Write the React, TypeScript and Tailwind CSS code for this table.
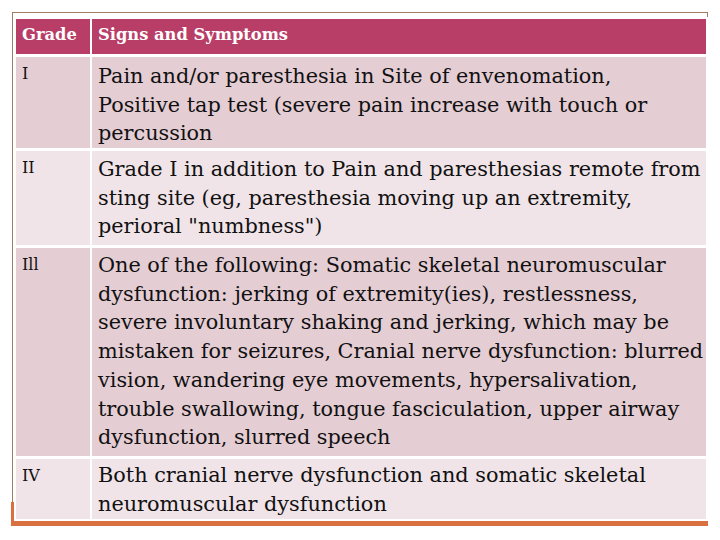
const ROWS = [
  {
    grade: "I",
    pad: "pt-[5px]",
    lines: [
      "Pain and/or paresthesia in Site of envenomation,",
      "Positive tap test (severe pain increase with touch or",
      "percussion",
    ],
  },
  {
    grade: "II",
    pad: "pt-[4px]",
    lines: [
      "Grade I in addition to Pain and paresthesias remote from",
      "sting site (eg, paresthesia moving up an extremity,",
      'perioral "numbness")',
    ],
  },
  {
    grade: "Ill",
    pad: "pt-[3px]",
    lines: [
      "One of the following: Somatic skeletal neuromuscular",
      "dysfunction: jerking of extremity(ies), restlessness,",
      "severe involuntary shaking and jerking, which may be",
      "mistaken for seizures, Cranial nerve dysfunction: blurred",
      "vision, wandering eye movements, hypersalivation,",
      "trouble swallowing, tongue fasciculation, upper airway",
      "dysfunction, slurred speech",
    ],
  },
  {
    grade: "IV",
    pad: "pt-[2px]",
    lines: ["Both cranial nerve dysfunction and somatic skeletal", "neuromuscular dysfunction"],
  },
];

export default function App() {
  return (
    <div className="w-[720px] h-[540px] bg-white pt-[12px] pl-[12px] font-[family-name:DejaVu_Serif,serif]">
      <div className="relative w-[696px] border-t border-l border-[#a27c5e]">
        <div className="absolute right-0 top-0 w-px h-[4px] bg-[#a27c5e]" />
        <div className="pl-[3px] pt-[6px]">
          <div className="grid grid-cols-[74px_614px] grid-rows-[35px_91px_94px_208px_60px] gap-x-[2px] gap-y-[3px]">
            <div className="bg-[#b83e68] px-[6px] pt-[5px] text-white font-bold text-[16.3px] leading-[22px]">Grade</div>
            <div className="bg-[#b83e68] px-[6px] pt-[5px] text-white font-bold text-[16.3px] leading-[22px]">
              Signs and Symptoms
            </div>
            {ROWS.map((r, i) => {
              const bg = i % 2 === 0 ? "bg-[#e5cdd4]" : "bg-[#f0e4e8]";
              return [
                <div key={r.grade + "g"} className={`${bg} px-[6px] pt-[7px] text-[16px] leading-[20px] text-[#111]`}>
                  {r.grade}
                </div>,
                <div
                  key={r.grade + "t"}
                  className={`${bg} ${r.pad} pl-[6px] text-[20.8px] leading-[28.7px] text-[#111] whitespace-nowrap overflow-hidden`}
                >
                  {r.lines.map((l) => (
                    <div key={l}>{l}</div>
                  ))}
                </div>,
              ];
            })}
          </div>
        </div>
        <div className="relative mt-[2px] -ml-px h-[5px] bg-[#d8703f]" />
        <div className="absolute -left-[2px] bottom-0 w-[3px] h-[24px] bg-[#d8703f]" />
      </div>
    </div>
  );
}
